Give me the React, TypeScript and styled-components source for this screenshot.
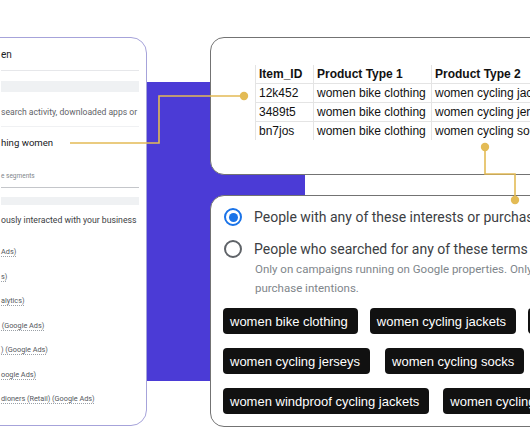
import styled, { createGlobalStyle } from 'styled-components';

const GlobalStyle = createGlobalStyle`
  html, body {
    margin: 0;
    padding: 0;
    background: #ffffff;
  }
`;

const Canvas = styled.div`
  position: relative;
  width: 530px;
  height: 442px;
  overflow: hidden;
  background: #ffffff;
  font-family: Roboto, 'Liberation Sans', Arial, sans-serif;
`;

const Backdrop = styled.div`
  position: absolute;
  left: 147px;
  top: 82px;
  width: 158px;
  height: 299px;
  background: #4b3bd6;
`;

const SettingsCard = styled.div`
  position: absolute;
  left: -24px;
  top: 37px;
  width: 171px;
  height: 389px;
  box-sizing: border-box;
  padding: 10px 7px 0 24px;
  background: #ffffff;
  border: 1.5px solid #a6a3da;
  border-radius: 16px;
  display: flex;
  flex-direction: column;
  overflow: hidden;
`;

const Line = styled.div<{ $size: number; $color?: string; $top?: number }>`
  font-size: ${p => p.$size}px;
  color: ${p => p.$color || '#202124'};
  margin-top: ${p => p.$top || 0}px;
  line-height: 1.2;
  white-space: nowrap;
`;

const Rule = styled.div<{ $top: number; $color?: string }>`
  height: 1px;
  margin-top: ${p => p.$top}px;
  background: ${p => p.$color || '#e6e7ea'};
`;

const Field = styled.div<{ $top: number; $h: number }>`
  height: ${p => p.$h}px;
  margin-top: ${p => p.$top}px;
  background: #eff1f3;
`;

const SegmentList = styled.div`
  display: flex;
  flex-direction: column;
  gap: 15px;
  margin-top: 22px;
`;

const Segment = styled.span`
  font-size: 7.3px;
  line-height: 9.5px;
  color: #54585d;
  white-space: nowrap;
  text-decoration: underline dotted #9aa0a6;
  text-underline-offset: 1.5px;
`;

const Panel = styled.div<{ $top: number; $h: number }>`
  position: absolute;
  left: 210px;
  top: ${p => p.$top}px;
  width: 345px;
  height: ${p => p.$h}px;
  box-sizing: border-box;
  background: #ffffff;
  border: 1.5px solid #737373;
  border-radius: 14px;
  overflow: hidden;
`;

const Table = styled.table`
  border-collapse: collapse;
  table-layout: fixed;
  width: 400px;
  margin: 27px 0 0 44px;
  font-family: 'Liberation Sans', Arial, sans-serif;
  font-size: 12px;
  color: #111;
`;

const Th = styled.th<{ $w: number }>`
  text-align: left;
  font-weight: bold;
  height: 18px;
  padding: 0 3px;
  width: ${p => p.$w}px;
  white-space: nowrap;
  border-left: 1px solid #e4e4e4;
  border-bottom: 1px solid #e4e4e4;
`;

const Td = styled.td`
  height: 18px;
  padding: 0 3px;
  white-space: nowrap;
  border-left: 1px solid #e4e4e4;
  border-bottom: 1px solid #e4e4e4;
  tr:last-child > & {
    border-bottom: none;
  }
`;

const Options = styled.div`
  display: flex;
  flex-direction: column;
  padding: 12px 0 0 13px;
`;

const Option = styled.div<{ $top?: number }>`
  display: flex;
  align-items: center;
  gap: 12px;
  margin-top: ${p => p.$top || 0}px;
  font-size: 14px;
  color: #3c4043;
  white-space: nowrap;
  height: 18px;
`;

const Radio = styled.span<{ $checked?: boolean }>`
  width: 18px;
  height: 18px;
  box-sizing: border-box;
  border-radius: 50%;
  border: 2px solid ${p => (p.$checked ? '#1a73e8' : '#5f6368')};
  display: inline-flex;
  align-items: center;
  justify-content: center;
  flex: none;
  &::after {
    content: '';
    width: 9px;
    height: 9px;
    border-radius: 50%;
    background: ${p => (p.$checked ? '#1a73e8' : 'transparent')};
  }
`;

const Hint = styled.div`
  margin: 2px 0 0 31px;
  font-size: 11.5px;
  line-height: 19px;
  color: #80868b;
  white-space: nowrap;
`;

const ChipRows = styled.div`
  display: flex;
  flex-direction: column;
  gap: 14px;
  margin: 10px 0 0 12px;
`;

const ChipRow = styled.div<{ $gap: number }>`
  display: flex;
  gap: ${p => p.$gap}px;
`;

const Chip = styled.span`
  flex: none;
  height: 26px;
  padding: 0 10px 0 7px;
  display: inline-flex;
  align-items: center;
  background: #111111;
  color: #ffffff;
  border-radius: 4px;
  font-family: 'Liberation Sans', Arial, sans-serif;
  font-size: 13px;
  white-space: nowrap;
`;

const Connectors = styled.svg`
  position: absolute;
  left: 0;
  top: 0;
  pointer-events: none;
`;

const segments = [
  'Ads)',
  's)',
  'alytics)',
  '\u200a(Google Ads)',
  ') (Google Ads)',
  'oogle Ads)',
  'dioners (Retail) (Google Ads)',
];

const rows = [
  ['12k452', 'women bike clothing', 'women cycling jackets'],
  ['3489t5', 'women bike clothing', 'women cycling jerseys'],
  ['bn7jos', 'women bike clothing', 'women cycling socks'],
];

const chipRows: { gap: number; items: string[] }[] = [
  { gap: 12, items: ['women bike clothing', 'women cycling jackets', 'women cycling shorts'] },
  { gap: 15, items: ['women cycling jerseys', 'women cycling socks'] },
  { gap: 14, items: ['women windproof cycling jackets', 'women cycling gloves'] },
];

export default function App() {
  const gold = '#e3bb55';
  return (
    <>
      <GlobalStyle />
      <Canvas>
        <Backdrop />

        <SettingsCard>
          <Line $size={10} $top={1}>en</Line>
          <Rule $top={9} />
          <Field $top={10} $h={11} />
          <Line $size={8.6} $color="#5f6368" $top={15}>search activity, downloaded apps or</Line>
          <Rule $top={9} $color="#f0f1f3" />
          <Line $size={9.6} $top={10}>hing women</Line>
          <Line $size={6.5} $color="#80868b" $top={24}>e segments</Line>
          <Rule $top={6} $color="#c4c6ca" />
          <Field $top={9} $h={8} />
          <Line $size={8.7} $color="#3c4043" $top={10}>ously interacted with your business</Line>
          <SegmentList>
            {segments.map(s => (
              <Segment key={s}>{s}</Segment>
            ))}
          </SegmentList>
        </SettingsCard>

        <Panel $top={37} $h={138}>
          <Table>
            <thead>
              <tr>
                <Th $w={51}>Item_ID</Th>
                <Th $w={111}>Product Type 1</Th>
                <Th $w={217}>Product Type 2</Th>
              </tr>
            </thead>
            <tbody>
              {rows.map(r => (
                <tr key={r[0]}>
                  {r.map(c => (
                    <Td key={c}>{c}</Td>
                  ))}
                </tr>
              ))}
            </tbody>
          </Table>
        </Panel>

        <Panel $top={195} $h={232}>
          <Options>
            <Option>
              <Radio $checked />
              People with any of these interests or purchase intentions
            </Option>
            <Option $top={14}>
              <Radio />
              People who searched for any of these terms on Google
            </Option>
            <Hint>
              Only on campaigns running on Google properties. Only applies to
              <br />
              purchase intentions.
            </Hint>
          </Options>
          <ChipRows>
            {chipRows.map((row, i) => (
              <ChipRow key={i} $gap={row.gap}>
                {row.items.map(item => (
                  <Chip key={item}>{item}</Chip>
                ))}
              </ChipRow>
            ))}
          </ChipRows>
        </Panel>

        <Connectors width="530" height="442" viewBox="0 0 530 442">
          <path d="M70 143 H159 V96 H244" fill="none" stroke={gold} strokeWidth="1.6" />
          <circle cx="244" cy="96" r="4.2" fill={gold} />
          <path d="M485 147 V174 H515 V200" fill="none" stroke={gold} strokeWidth="1.6" />
          <circle cx="485" cy="147" r="4.2" fill={gold} />
          <circle cx="515" cy="200" r="4.2" fill={gold} />
        </Connectors>
      </Canvas>
    </>
  );
}
